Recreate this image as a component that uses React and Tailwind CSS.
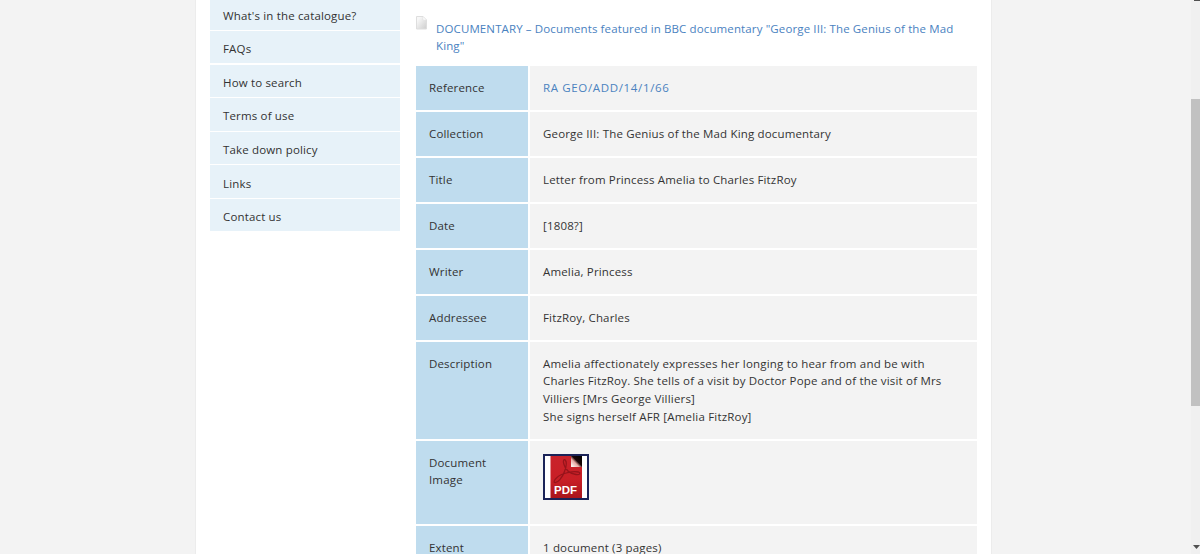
import React from 'react';

const MENU = [
  "What's in the catalogue?",
  'FAQs',
  'How to search',
  'Terms of use',
  'Take down policy',
  'Links',
  'Contact us',
];

const ROWS = [
  { label: 'Reference', value: <a className="text-[#4a82bf] tracking-[0.65px]">RA GEO/ADD/14/1/66</a>, h: 'h-[44px]' },
  { label: 'Collection', value: 'George III: The Genius of the Mad King documentary', h: 'h-[44px]' },
  { label: 'Title', value: 'Letter from Princess Amelia to Charles FitzRoy', h: 'h-[44px]' },
  { label: 'Date', value: '[1808?]', h: 'h-[44px]' },
  { label: 'Writer', value: 'Amelia, Princess', h: 'h-[44px]' },
  { label: 'Addressee', value: 'FitzRoy, Charles', h: 'h-[44px]' },
  {
    label: 'Description',
    value: (
      <div className="tracking-[0.19px]">
        Amelia affectionately expresses her longing to hear from and be with<br />
        Charles FitzRoy. She tells of a visit by Doctor Pope and of the visit of Mrs<br />
        Villiers [Mrs George Villiers]<br />
        She signs herself AFR [Amelia FitzRoy]
      </div>
    ),
    h: 'h-[97px]',
  },
  { label: <>Document<br />Image</>, value: <PdfIcon />, h: 'h-[83px]' },
  { label: 'Extent', value: '1 document (3 pages)', h: 'h-[44px]' },
];

function PdfIcon() {
  return (
    <svg width="46" height="46" viewBox="0 0 46 46" className="block mt-[0.4px]">
      <defs>
        <linearGradient id="red" x1="0" y1="0" x2="0" y2="1">
          <stop offset="0" stopColor="#c9222a" />
          <stop offset="0.55" stopColor="#c91f26" />
          <stop offset="1" stopColor="#a9151c" />
        </linearGradient>
        <linearGradient id="fold" x1="0" y1="1" x2="1" y2="0">
          <stop offset="0.1" stopColor="#fbeeea" />
          <stop offset="0.38" stopColor="#e8a9a2" />
          <stop offset="0.55" stopColor="#1a0506" />
          <stop offset="1" stopColor="#000" />
        </linearGradient>
      </defs>
      <rect x="1" y="1" width="44" height="44" fill="#fff" stroke="#1b2358" strokeWidth="2" />
      <rect x="7.5" y="2" width="31.5" height="42" fill="url(#red)" />
      <path d="M28 2h11v11H28z" fill="url(#fold)" />
      <path
        d="M11.5 28.5c3 1 8-5 10-11 1.5-4 2.5-9 1-11s-3 0-1.5 4c1.5 5 5 9 12 10 4 .5 5-1.500 2.500-2.500-4-1-11 .3-17 2.500-5 2-8.500 7-7 8z"
        fill="none" stroke="#96141b" strokeWidth="1.3"
      />
      <text x="11" y="40" fontSize="11.5" fontWeight="700" fill="#fff" letterSpacing="0" fontFamily="Liberation Sans, sans-serif">PDF</text>
    </svg>
  );
}

function PageIcon() {
  return (
    <svg width="11" height="15" viewBox="0 0 11 15" className="mt-[15px] shrink-0">
      <defs>
        <linearGradient id="sheet" x1="0" y1="0" x2="1" y2="1">
          <stop offset="0.2" stopColor="#f7f7f7" />
          <stop offset="1" stopColor="#cdcdcd" />
        </linearGradient>
      </defs>
      <path d="M.5 1.5h6.5l3.5 3.5v9H.5z" fill="url(#sheet)" stroke="#dedede" />
      <path d="M7 1.5V5h3.5z" fill="#fff" stroke="#e2e2e2" strokeWidth=".6" />
    </svg>
  );
}

function Sidebar() {
  return (
    <nav className="w-[190px] shrink-0 -mt-[2.2px] flex flex-col gap-[1.4px]">
      {MENU.map((label, idx) => (
        <a key={idx} className="h-[32.15px] shrink-0 bg-[#e7f2f9] px-[13px] flex items-end pb-[5.4px]">
          {label}
        </a>
      ))}
    </nav>
  );
}

function Scrollbar() {
  return (
    <div className="w-[9px] h-full shrink-0 bg-[#f0f0f0] flex flex-col overflow-hidden">
      <div className="h-px w-[6px] ml-[3px] bg-[#505050]" />
      <div className="mt-[98px] h-[307px] bg-[#c1c1c1]" />
      <svg width="7" height="4" viewBox="0 0 7 4" className="mt-auto mb-[5px] ml-[2px]">
        <path d="M0 0h7L3.5 4z" fill="#505050" />
      </svg>
    </div>
  );
}

export default function App() {
  return (
    <div className="h-[554px] w-[1200px] overflow-hidden bg-[#f3f3f3] flex font-['Open_Sans',sans-serif] text-[11.5px] leading-[17.7px] tracking-[0.16px] text-[#333]">
      <div className="w-[797px] ml-[195px] h-full bg-white border-x border-[#ececec] pl-[14px] flex items-start">
        <Sidebar />
        <main className="ml-4 w-[561px] shrink-0">
          <div className="flex h-[66px]">
            <PageIcon />
            <a className="ml-[9px] mt-[19.6px] text-[#4a82bf] whitespace-nowrap tracking-[0.12px]">
              DOCUMENTARY – Documents featured in BBC documentary "George III: The Genius of the Mad<br />King"
            </a>
          </div>
          <div className="flex flex-col gap-[2px]">
            {ROWS.map((row, idx) => (
              <div key={idx} className={`${row.h} flex shrink-0 gap-[2px]`}>
                <div className="w-[112px] bg-[#bfdcee] px-[13px] pt-[12.6px]">{row.label}</div>
                <div className="flex-1 bg-[#f3f3f3] px-[13px] pt-[12.6px] whitespace-nowrap">{row.value}</div>
              </div>
            ))}
          </div>
        </main>
      </div>
      <div className="flex-1" />
      <Scrollbar />
    </div>
  );
}
